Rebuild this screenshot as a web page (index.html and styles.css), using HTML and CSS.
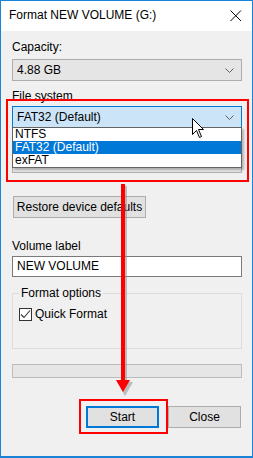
FILE: index.html
```html
<!DOCTYPE html>
<html>
<head>
<meta charset="utf-8">
<link rel="stylesheet" href="styles.css">
</head>
<body>
<div class="window">
  <div class="titlebar">
    <span class="title">Format NEW VOLUME (G:)</span>
    <svg class="close" width="12" height="12" viewBox="0 0 12 12"><path d="M0.5 0.5 L11 11 M11 0.5 L0.5 11" stroke="#000" stroke-width="1" fill="none"/></svg>
  </div>
  <div class="content">
    <div class="label l-capacity">Capacity:</div>
    <div class="combo c-capacity"><span>4.88 GB</span><svg class="chev" width="9" height="5" viewBox="0 0 9 5"><path d="M0.5 0.5 L4.5 4.5 L8.5 0.5" stroke="#606060" fill="none"/></svg></div>
    <div class="label l-fs">File system</div>
    <div class="combo hot c-fs"><span>FAT32 (Default)</span><svg class="chev" width="9" height="5" viewBox="0 0 9 5"><path d="M0.5 0.5 L4.5 4.5 L8.5 0.5" stroke="#606060" fill="none"/></svg></div>
    <div class="label l-alloc"></div>
    <div class="combo c-alloc"></div>
    <div class="btn restore">Restore device defaults</div>
    <div class="label l-vol">Volume label</div>
    <div class="textbox">NEW VOLUME</div>
    <fieldset class="group">
      <legend>Format options</legend>
      <div class="check"><span class="box"><svg width="11" height="11" viewBox="0 0 11 11"><path d="M1 5.5 L4 8.5 L10 1.5" stroke="#333" stroke-width="1.1" fill="none"/></svg></span>Quick Format</div>
    </fieldset>
    <div class="progress"></div>
    <div class="actions">
      <div class="btn start">Start</div>
      <div class="btn closebtn">Close</div>
    </div>
  </div>

  <div class="droplist">
    <div class="item">NTFS</div>
    <div class="item sel">FAT32 (Default)</div>
    <div class="item">exFAT</div>
  </div>
  <div class="redbox rb-fs"></div>
  <div class="redbox rb-start"></div>
  <svg class="arrow" width="24" height="216" viewBox="0 0 24 216">
    <rect x="8" y="2" width="4" height="200" fill="#888" opacity="0.5"/>
    <path d="M2 198 L18 198 L10 212 Z" fill="#888" opacity="0.5"/>
    <rect x="6" y="0" width="4" height="198" fill="#f00"/>
    <path d="M1 196 L15 196 L8 208 Z" fill="#f00"/>
  </svg>
  <svg class="cursor" width="13" height="21" viewBox="0 0 13 21">
    <path d="M0.5 0.5 L0.5 16.5 L4.5 12.5 L7.5 19.5 L9.5 18.5 L6.5 11.5 L11.5 11.5 Z" fill="#fff" stroke="#000" stroke-width="1"/>
  </svg>
</div>
</body>
</html>
```
FILE: styles.css
```css
* { box-sizing: border-box; }
html, body { margin: 0; padding: 0; background: #fff; }
body {
  font-family: "Liberation Sans", Arial, sans-serif;
  font-size: 12px;
  color: #000;
}
.window {
  position: relative;
  width: 253px;
  height: 458px;
  border: 1px solid #1883d7;
  border-bottom-width: 2px;
  background: #f0f0f0;
  overflow: hidden;
}
.titlebar {
  height: 30px;
  background: #fff;
  display: flex;
  align-items: center;
  padding-left: 8px;
  padding-right: 10px;
  justify-content: space-between;
}
.title { font-size: 12px; line-height: 15px; margin-top: -2px; }
.close { display: block; margin-top: -1px; }
.content {
  padding: 8px 10px 0 11px;
}
.label { line-height: 15px; height: 15px; }
.combo {
  height: 22px;
  border: 1px solid #adadad;
  background: #e5e5e5;
  display: flex;
  align-items: center;
  justify-content: space-between;
  padding: 0 7px 0 4px;
  line-height: 15px;
}
.combo.hot { background: #cce4f7; border-color: #0078d7; }
.chev { display: block; }
.l-capacity { margin-top: 1px; }
.c-capacity { margin-top: 4px; }
.l-fs { margin-top: 8px; }
.c-fs { margin-top: 2px; }
.l-alloc { margin-top: 6px; }
.c-alloc { margin-top: 2px; }
.btn {
  height: 22px;
  border: 1px solid #adadad;
  background: #e1e1e1;
  display: flex;
  align-items: center;
  justify-content: center;
  line-height: 15px;
}
.restore { width: 133px; margin-left: 1px; margin-top: 23px; }
.l-vol { margin-top: 21px; }
.textbox {
  margin-top: 2px;
  height: 21px;
  border: 1px solid #7a7a7a;
  background: #fff;
  padding: 0 4px;
  line-height: 19px;
}
.group {
  margin: 9px 0 0 0;
  padding: 6px 6px 0 6px;
  height: 63px;
  border: 1px solid #dcdcdc;
  min-width: 0;
}
.group legend {
  padding: 0 2px;
  margin-left: 0;
  line-height: 15px;
}
.check { display: flex; align-items: center; gap: 3px; line-height: 15px; }
.box {
  width: 13px; height: 13px;
  border: 1px solid #333;
  background: #fff;
  display: flex; align-items: center; justify-content: center;
}
.box svg { display: block; }
.progress {
  margin-top: 15px;
  height: 14px;
  border: 1px solid #bcbcbc;
  background: #e6e6e6;
}
.actions {
  display: flex;
  margin-top: 28px;
  padding-left: 74px;
  gap: 9px;
}
.start { width: 73px; border: 2px solid #0078d7; }
.closebtn { width: 73px; }
.droplist {
  position: absolute;
  left: 11px;
  top: 126px;
  width: 230px;
  border: 1px solid #646464;
  background: #fff;
  box-shadow: 2px 2px 2px rgba(0,0,0,0.25);
}
.item { height: 13px; line-height: 13px; padding-left: 2px; }
.item.sel { background: #0078d7; color: #fff; }
.redbox { position: absolute; border: 2px solid #f00; }
.rb-fs { left: 5px; top: 98px; width: 243px; height: 83px; }
.rb-start { left: 78px; top: 398px; width: 89px; height: 35px; }
.arrow { position: absolute; left: 114px; top: 183px; }
.cursor { position: absolute; left: 191px; top: 117px; }
```
